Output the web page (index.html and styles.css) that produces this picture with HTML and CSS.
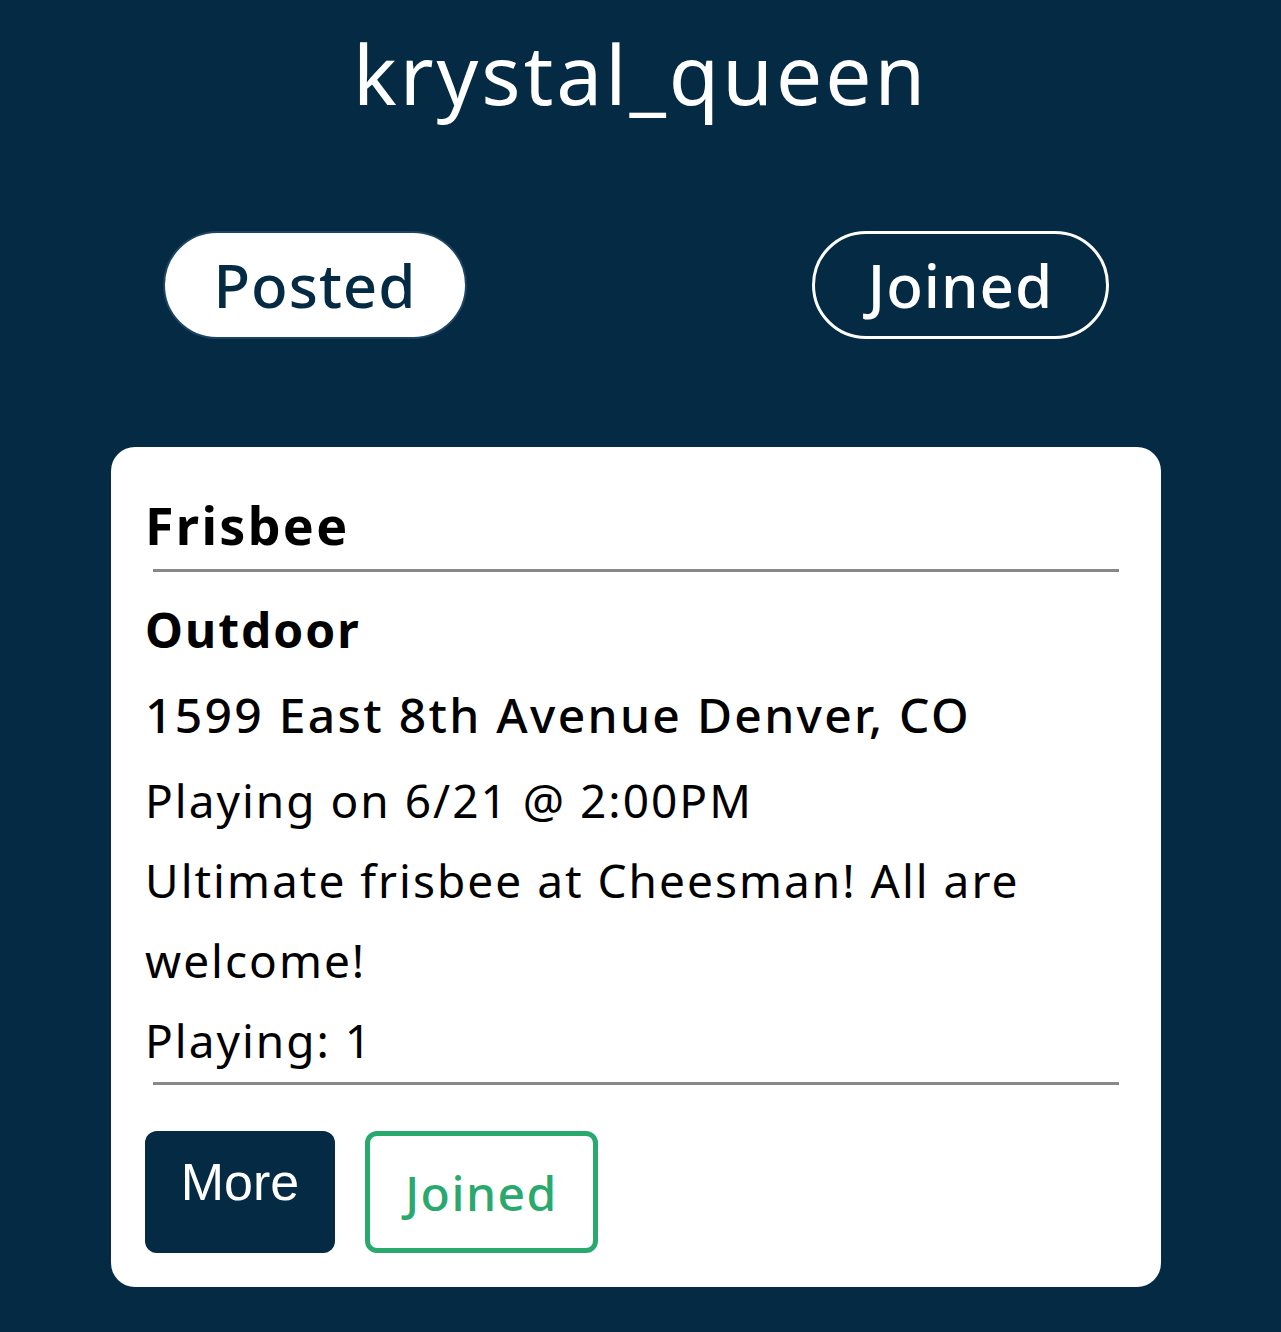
FILE: index.html
```html
<!DOCTYPE html>
<html>
<head>
<meta charset="utf-8">
<link rel="stylesheet" href="styles.css">
</head>
<body>
<div class="page">
  <h1 class="username">krystal_queen</h1>
  <div class="tabs">
    <button class="tab tab-active">Posted</button>
    <button class="tab tab-idle">Joined</button>
  </div>
  <div class="card">
    <h2 class="sport">Frisbee</h2>
    <hr class="rule rule-top">
    <h3 class="setting">Outdoor</h3>
    <p class="address">1599 East 8th Avenue Denver, CO</p>
    <p class="line">Playing on 6/21 @ 2:00PM</p>
    <p class="line desc">Ultimate frisbee at Cheesman! All are welcome!</p>
    <p class="line">Playing: 1</p>
    <hr class="rule rule-bottom">
    <div class="actions">
      <button class="btn-more">More</button>
      <button class="btn-joined">Joined</button>
    </div>
  </div>
</div>
</body>
</html>
```

FILE: styles.css
```css
html, body {
  margin: 0;
  padding: 0;
  background: #042a44;
}
.page {
  width: 1281px;
  min-height: 1332px;
  font-family: "Noto Sans", "DejaVu Sans", sans-serif;
  color: #000;
  padding-top: 18px;
  box-sizing: border-box;
}
.username {
  margin: 0;
  text-align: center;
  color: #fff;
  font-weight: 400;
  font-size: 82px;
  letter-spacing: 3px;
  line-height: 110px;
}
.tabs {
  display: flex;
  justify-content: space-between;
  padding: 103px 172px 0 163px;
}
.tab {
  font-family: "Noto Sans", sans-serif;
  font-size: 60px;
  letter-spacing: 1px;
  font-weight: 500;
  height: 108px;
  padding: 0;
  border-radius: 54px;
  border: 3px solid #fff;
  background: transparent;
  color: #fff;
}
.tab-active {
  width: 304px;
  background: #fff;
  color: #042a44;
  border: 2px solid #1d4562;
}
.tab-idle { width: 297px; }
.card {
  margin: 108px 120px 0 111px;
  background: #fff;
  border-radius: 24px;
  padding: 45px 34px 34px 34px;
}
.sport {
  margin: 0;
  font-size: 52px;
  letter-spacing: 2.3px;
  font-weight: 700;
  line-height: 66px;
}
.rule {
  border: 0;
  height: 3px;
  background: #888;
  margin: 11px 8px 18px 8px;
}
.rule-bottom {
  margin: 2px 8px 0 8px;
}
.setting {
  margin: 0;
  font-size: 48px;
  letter-spacing: 2px;
  font-weight: 700;
  line-height: 80px;
}
.address {
  margin: 0;
  font-size: 48px;
  letter-spacing: 2.3px;
  font-weight: 500;
  line-height: 90px;
}
.line {
  margin: 0;
  font-size: 46px;
  letter-spacing: 2px;
  font-weight: 400;
  line-height: 80px;
}
.desc { width: 950px; }
.actions {
  display: flex;
  gap: 30px;
  margin-top: 46px;
}
.btn-more {
  width: 190px;
  height: 122px;
  background: #042a44;
  color: #fff;
  border: 0;
  border-radius: 12px;
  font-family: "Liberation Sans", Arial, sans-serif;
  font-size: 52px;
  padding: 0 0 20px 0;
}
.btn-joined {
  width: 233px;
  height: 122px;
  background: #fff;
  color: #2aa96e;
  border: 5px solid #2aa96e;
  border-radius: 12px;
  font-family: "Noto Sans", sans-serif;
  font-size: 48px;
  letter-spacing: 1.5px;
  font-weight: 500;
  padding: 0;
}
```
